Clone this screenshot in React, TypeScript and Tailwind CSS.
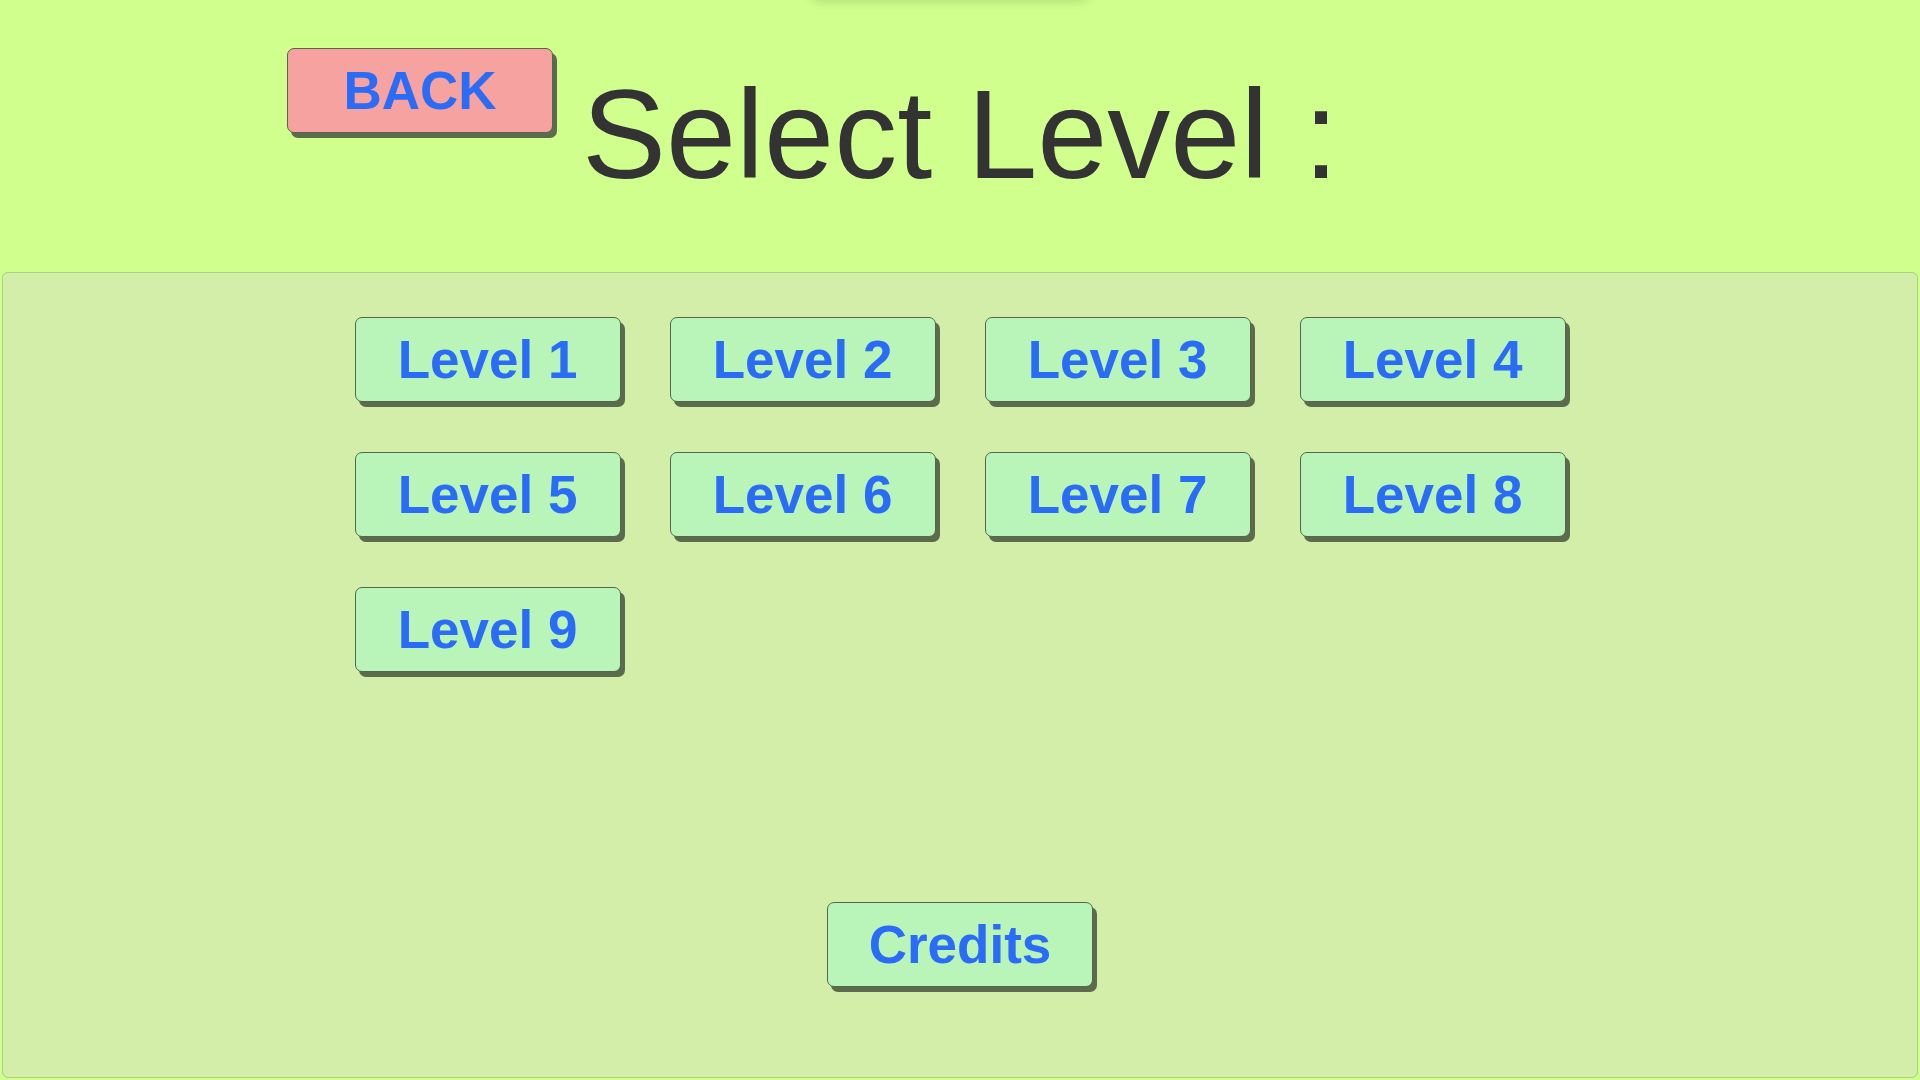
import React from "react";

const font = { fontFamily: '"Liberation Sans", Arial, sans-serif' };

function GameButton({ label, pink = false }: { label: string; pink?: boolean }) {
  return (
    <button
      className={
        "w-[266px] h-[85px] rounded-[7px] border border-[#56664c] shadow-[4px_5px_0_0_#5b6b4b] flex items-center justify-center text-[53px] font-bold text-[#2b6cf6] leading-none " +
        (pink ? "bg-[#f5a2a0]" : "bg-[#b9f5b9]")
      }
      style={font}
    >
      {label}
    </button>
  );
}

export default function App() {
  const levels = [1, 2, 3, 4, 5, 6, 7, 8, 9];
  return (
    <div className="relative w-[1920px] h-[1080px] overflow-hidden bg-[#d0ff8d] flex flex-col" style={font}>
      <div className="absolute left-[810px] top-[-20px] w-[280px] h-[20px] rounded-full shadow-[0_2px_10px_rgba(60,80,20,0.18)]" />
      <div className="h-[272px] shrink-0 flex items-start pl-[287px]">
        <div className="mt-[48px]">
          <GameButton label="BACK" pink />
        </div>
        <h1 className="ml-[29px] mt-[72px] text-[126px] leading-[125px] text-[#333333] font-normal">
          Select Level :
        </h1>
      </div>
      <div className="mx-[2px] mb-[2px] flex-1 rounded-[6px] border border-[#a8d27c] bg-[#d2eea9] flex flex-col items-center">
        <div className="mt-[44px] grid grid-cols-[repeat(4,266px)] gap-x-[49px] gap-y-[50px]">
          {levels.map((n) => (
            <GameButton key={n} label={`Level ${n}`} />
          ))}
        </div>
        <div className="mt-auto mb-[90px]">
          <GameButton label="Credits" />
        </div>
      </div>
    </div>
  );
}
